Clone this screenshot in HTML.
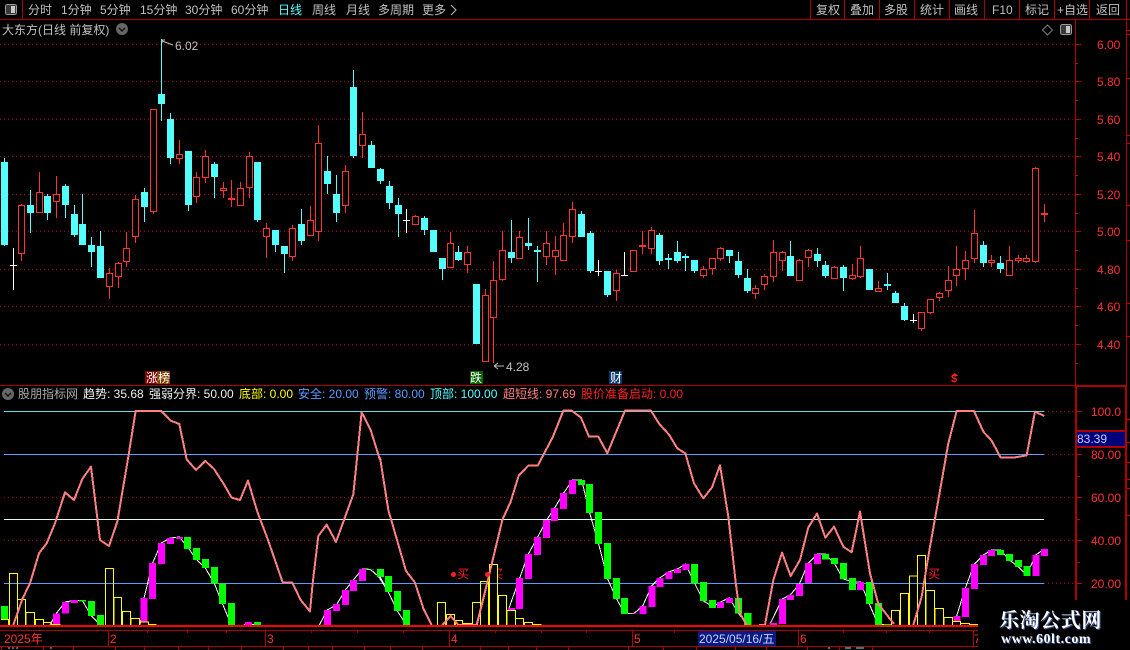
<!DOCTYPE html>
<html lang="zh"><head><meta charset="utf-8"><title>大东方</title>
<style>
html,body{margin:0;padding:0;background:#000;width:1130px;height:650px;overflow:hidden}
#r{position:relative;width:1130px;height:650px;background:#000;overflow:hidden;font:12px/16px "Liberation Sans","WenQuanYi Zen Hei","Noto Sans CJK SC",sans-serif;color:#c0c0c0}
#r span{position:absolute;white-space:nowrap}
svg{position:absolute;left:0;top:0}
.a{color:#ff3232;font-size:12px;left:1097px}
.l{color:#ff3232;left:1091px}
.d{color:#ff3232;top:631px}
</style></head><body><div id="r">
<svg width="1130" height="650" viewBox="0 0 1130 650" shape-rendering="crispEdges" fill="none">
<!-- grid -->
<path d="M0 44.5H1075M0 81.5H1075M0 119.5H1075M0 156.5H1075M0 194.5H1075M0 231.5H1075M0 269.5H1075M0 306.5H1075M0 344.5H1075M4 497.5H1075M4 540.5H1075" stroke="#a00000" stroke-dasharray="1 3"/>
<path d="M1044 411.5H1075M1044 454.5H1075M1044 583.5H1075" stroke="#a00000" stroke-dasharray="1 3"/>
<!-- frame -->
<path d="M0 19.5H1130M22.5 0V19M810.5 0V19M844.5 0V19M879.5 0V19M914.5 0V19M949.5 0V19M984.5 0V19M1019.5 0V19M1054.5 0V19M1089.5 0V19M1126.5 0V19M0 385.5H1075M1075.5 19V385" stroke="#b00000"/>
<path d="M1076 386V626M1075 386H1127M1126 386V600M1076 431H1126M1076 447H1126" stroke="#b00000" stroke-width="2"/>
<path d="M1126.5 19V386" stroke="#b00000"/>
<path d="M1075 44.5h6M1075 81.5h6M1075 119.5h6M1075 156.5h6M1075 194.5h6M1075 231.5h6M1075 269.5h6M1075 306.5h6M1075 344.5h6M1075 63.5h3M1075 100.5h3M1075 138.5h3M1075 175.5h3M1075 213.5h3M1075 250.5h3M1075 288.5h3M1075 325.5h3M1075 363.5h3M1077 411.5h5M1077 454.5h5M1077 497.5h5M1077 540.5h5M1077 583.5h5M1077 476.5h3M1077 519.5h3M1077 562.5h3" stroke="#c00000"/>
<path d="M1127 30.5h3M1127 34.5h3M1127 78.5h3M1127 135.5h3M1127 143.5h3M1127 205.5h3M1127 240.5h3M1127 303.5h3M1127 336.5h3M1127 419.5h3M1127 442.5h3M1127 462.5h3M1127 479.5h3M1127 488.5h3M1127 515.5h3" stroke="#c00000"/>
<!-- icons -->
<rect x="5.5" y="4.5" width="11" height="10" rx="2" fill="#3a3a3a" stroke="#9a9a9a"/><rect x="11" y="6" width="4" height="7" fill="#c8c8c8"/>
<path d="M451 5l5 5-5 5" stroke="#c0c0c0" shape-rendering="auto"/>
<circle cx="122" cy="29" r="6" fill="#666" shape-rendering="auto"/><path d="M119 28l3 3 3-3" stroke="#111" stroke-width="1.4" shape-rendering="auto"/>
<circle cx="8" cy="394" r="6" fill="#666" shape-rendering="auto"/><path d="M5 393l3 3 3-3" stroke="#111" stroke-width="1.4" shape-rendering="auto"/>
<path d="M1047.5 25l5 5-5 5-5-5z" stroke="#808080" shape-rendering="auto"/>
<rect x="1060.5" y="24.5" width="11" height="10" rx="2" fill="#3a3a3a" stroke="#9a9a9a"/><rect x="1066" y="26" width="4" height="7" fill="#c8c8c8"/>
<!-- lower horizontal lines -->
<path d="M4 411.5H1044" stroke="#55e0e8"/>
<path d="M4 454.5H1044M4 583.5H1044" stroke="#5c9cff"/>
<path d="M4 519.5H1044" stroke="#d8f8f8"/>
<!-- cyan candle wicks -->
<path stroke="#54ffff" d="M4.5 158V246M30.5 190V233M47.5 194V220M65.5 184V218M74.5 205V237M82.5 194V245M91.5 237V267M100.5 231V278M144.5 188V222M161.5 39V121M170.5 113V164M188.5 151V211M214.5 162V198M257.5 162V222M275.5 230V252M284.5 246V273M301.5 209V245M327.5 156V194M336.5 175V222M353.5 70V158M371.5 141V168M380.5 168V184M389.5 181V209M398.5 198V237M424.5 216V235M442.5 258V280M458.5 246V261M511.5 220V263M528.5 218V250M537.5 246V282M581.5 211V237M590.5 231V273M607.5 271V297M659.5 233V265M668.5 254V269M677.5 241V263M685.5 254V271M694.5 260V273M729.5 250V263M738.5 252V278M747.5 269V293M790.5 241V276M817.5 248V267M825.5 261V278M843.5 265V291M887.5 273V290M895.5 291V303M904.5 303V321M983.5 241V267M1000.5 256V273"/>
<!-- cyan bodies -->
<path fill="#54ffff" d="M1 162h7V245h-7zM27 205h7V213h-7zM44 196h7V213h-7zM62 186h7V205h-7zM71 214h7V235h-7zM79 224h7V245h-7zM88 245h7V252h-7zM97 246h7V278h-7zM141 192h7V207h-7zM158 94h7V104h-7zM167 119h7V158h-7zM185 151h7V205h-7zM211 164h7V177h-7zM254 162h7V220h-7zM272 230h7V245h-7zM281 246h7V254h-7zM298 224h7V241h-7zM324 171h7V184h-7zM333 194h7V213h-7zM350 87h7V156h-7zM368 145h7V168h-7zM377 169h7V181h-7zM386 186h7V203h-7zM395 205h7V214h-7zM421 218h7V230h-7zM430 230h7V252h-7zM439 258h7V269h-7zM455 252h7V260h-7zM473 284h7V344h-7zM508 252h7V258h-7zM525 243h7V246h-7zM534 250h7V252h-7zM578 214h7V237h-7zM587 233h7V271h-7zM604 271h7V295h-7zM656 235h7V261h-7zM665 258h7V260h-7zM674 252h7V261h-7zM682 256h7V258h-7zM691 260h7V271h-7zM726 250h7V256h-7zM735 261h7V275h-7zM744 278h7V291h-7zM787 256h7V276h-7zM814 254h7V261h-7zM822 265h7V276h-7zM840 267h7V278h-7zM866 269h7V290h-7zM884 284h7V286h-7zM892 293h7V303h-7zM901 306h7V320h-7zM980 245h7V263h-7zM997 263h7V269h-7z"/>
<!-- white dojis -->
<path stroke="#fff" d="M13.5 248V290M10 265.5h7M406.5 209V233M403 220.5h7M598.5 260V276M595 271.5h7M624.5 252V276M621 275.5h7M913.5 314V323M910 320.5h7"/>
<!-- red wicks -->
<path stroke="#ff3232" d="M21.5 204V261M39.5 172V213M56.5 176V218M109.5 268V299M118.5 262V288M126.5 232V267M135.5 195V243M153.5 109V214M179.5 140V164M196.5 172V203M205.5 150V183M223.5 182V198M231.5 180V207M240.5 182V206M249.5 152V198M266.5 223V258M292.5 225V261M310.5 206V236M318.5 125V241M345.5 165V213M362.5 112V158M415.5 215V225M450.5 232V268M467.5 246V273M485.5 289V362M493.5 261V363M502.5 231V281M519.5 231V259M546.5 231V265M555.5 236V275M563.5 223V261M572.5 202V243M616.5 270V301M642.5 231V254M651.5 227V254M703.5 266V278M712.5 258V275M720.5 247V261M755.5 285V299M764.5 274V290M773.5 240V282M782.5 251V271M799.5 259V281M808.5 249V267M834.5 266V279M852.5 264V280M860.5 246V278M878.5 281V292M921.5 312V331M930.5 299V314M939.5 292V301M948.5 266V297M956.5 246V286M965.5 251V280M974.5 210V263M991.5 255V267M1009.5 246V276M1018.5 255V263M1026.5 255V263M1035.5 167V263M1044.5 204V222"/>
<!-- red hollow bodies -->
<path stroke="#ff3232" fill="#000" d="M18.5 205.5h6V253.5h-6zM36.5 192.5h6V212.5h-6zM53.5 194.5h6V201.5h-6zM106.5 273.5h6V286.5h-6zM115.5 263.5h6V276.5h-6zM123.5 248.5h6V261.5h-6zM132.5 199.5h6V236.5h-6zM150.5 109.5h6V211.5h-6zM176.5 154.5h6V158.5h-6zM193.5 177.5h6V196.5h-6zM202.5 156.5h6V177.5h-6zM220.5 188.5h6V190.5h-6zM237.5 188.5h6V205.5h-6zM246.5 156.5h6V187.5h-6zM263.5 228.5h6V236.5h-6zM289.5 228.5h6V256.5h-6zM307.5 220.5h6V235.5h-6zM315.5 143.5h6V231.5h-6zM342.5 171.5h6V205.5h-6zM359.5 134.5h6V145.5h-6zM412.5 216.5h6V224.5h-6zM447.5 243.5h6V267.5h-6zM464.5 252.5h6V264.5h-6zM482.5 295.5h6V361.5h-6zM490.5 280.5h6V317.5h-6zM499.5 250.5h6V279.5h-6zM516.5 237.5h6V258.5h-6zM543.5 243.5h6V256.5h-6zM552.5 250.5h6V256.5h-6zM560.5 235.5h6V260.5h-6zM569.5 209.5h6V236.5h-6zM613.5 273.5h6V290.5h-6zM630.5 250.5h6V271.5h-6zM648.5 230.5h6V248.5h-6zM700.5 269.5h6V275.5h-6zM709.5 258.5h6V268.5h-6zM717.5 248.5h6V258.5h-6zM752.5 288.5h6V293.5h-6zM761.5 276.5h6V284.5h-6zM770.5 252.5h6V276.5h-6zM779.5 252.5h6V260.5h-6zM796.5 260.5h6V280.5h-6zM805.5 250.5h6V257.5h-6zM831.5 267.5h6V278.5h-6zM849.5 275.5h6V278.5h-6zM857.5 258.5h6V276.5h-6zM875.5 288.5h6V291.5h-6zM918.5 312.5h6V328.5h-6zM927.5 299.5h6V312.5h-6zM936.5 293.5h6V297.5h-6zM945.5 280.5h6V290.5h-6zM953.5 269.5h6V275.5h-6zM962.5 260.5h6V268.5h-6zM971.5 233.5h6V258.5h-6zM988.5 260.5h6V262.5h-6zM1006.5 260.5h6V275.5h-6zM1015.5 258.5h6V260.5h-6zM1023.5 258.5h6V261.5h-6zM1032.5 168.5h6V261.5h-6z"/>
<path fill="#ff3232" d="M228 198h7v2h-7zM639 245h7v2h-7zM1041 213h7v2h-7z"/>
<!-- extreme marks -->
<path stroke="#c0c0c0" d="M162 40h3M162 40v3M162 41l11 4" shape-rendering="auto"/>
<path stroke="#c0c0c0" d="M494 366h10M494 366l4-3M494 366l4 3" shape-rendering="auto"/>
<!-- tags -->
<rect x="145" y="371" width="12" height="13" fill="#800000"/><rect x="157" y="371" width="13" height="13" fill="#804000"/>
<rect x="470" y="371" width="13" height="13" fill="#006400"/><rect x="609" y="371" width="13" height="13" fill="#0a3a6e"/>
<path d="M954.5 373l-3 3h7z" fill="#ff2020"/>
<!-- lower panel bars: zoom group 1 -->
<g transform="translate(0,400) scale(.33333)">
<polyline stroke="#fff" stroke-width="3" points="150,675 169,640 196,606 223,601 247,601 274,648 301,675"/>
<polyline stroke="#fff" stroke-width="3" points="420,675 432,594 458,489 484,429 511,414 538,411 562,440 589,478 616,504 643,550 667,610 694,675"/>
<polyline stroke="#fff" stroke-width="3" points="730,675 745,672 772,675"/>
<polyline stroke="#fff" stroke-width="3" points="958,675 982,630 1009,615 1036,570 1060,540 1087,507 1111,508 1136,530 1165,576 1192,633 1219,675"/>
<path fill="#ff00ff" d="M159 640h21V672h-21zM186 606h21V641h-21zM213 600h21V609h-21zM422 594h21V666h-21zM447 489h21V597h-21zM474 429h21V492h-21zM501 414h21V432h-21zM528 411h21V417h-21zM735 666h21V675h-21zM972 630h21V675h-21zM999 612h21V633h-21zM1026 570h21V615h-21zM1050 540h21V573h-21zM1077 507h21V543h-21z"/>
<path fill="#00ff00" d="M3 618h21V658h-21zM237 600h21V605h-21zM264 603h21V648h-21zM291 645h21V675h-21zM552 411h21V447h-21zM579 444h21V480h-21zM606 477h21V504h-21zM633 501h21V550h-21zM657 551h21V612h-21zM684 609h21V675h-21zM762 666h21V675h-21zM1101 508h21V510h-21zM1131 507h9V531h-9z"/>
<path stroke="#ffff00" stroke-width="3" d="M3 658H25V675M28 675V520H52V675M52 598H76V675M78 675V637H103V675M106 675V658H130V675M131 675V667H154V675M154 673H182M316 675V505H340V675M342 675V592H365V675M367 675V634H391V675M393 675V655H418V675M420 675V666H445V675M445 673H470"/>
<path stroke="#ff8080" stroke-width="6" stroke-linejoin="round" fill="none" d="M40 675L67 597L90 550L117 460L140 430L165 370L195 277L222 300L247 237L273 200L300 420L327 438L352 365L385 170L407 33L484 33L512 62L538 72L560 178L588 210L616 183L642 207L670 250L695 293L720 300L744 242L772 335L804 420L848 547L877 548L902 600L930 634L938 550L955 408L980 374L1008 426L1060 283L1085 37L1112 90L1140 180"/>
</g>
<!-- group 2 -->
<g transform="translate(380,400) scale(.33333)">
<polyline stroke="#fff" stroke-width="3" points="385,630 419,534 445,462 473,411 500,360 524,324 551,279 578,240 605,240 629,339 656,432 683,537 710,597 734,641 761,641 788,618 815,558 839,534 866,516 892,507 917,492 944,550 971,603 998,620 1021,606 1048,594 1076,641 1103,675"/>
<polyline stroke="#fff" stroke-width="3" points="0,530 25,576 52,633 79,675"/>
<path fill="#ff00ff" d="M384 624h21V631h-21zM408 534h21V627h-21zM435 462h21V537h-21zM462 411h21V465h-21zM489 360h21V414h-21zM513 324h21V363h-21zM540 279h21V327h-21zM567 240h21V282h-21zM751 639h21V641h-21zM778 618h21V642h-21zM805 558h21V621h-21zM829 534h21V561h-21zM856 516h21V537h-21zM882 507h21V519h-21zM907 492h21V510h-21zM1011 606h21V624h-21zM1038 594h21V609h-21z"/>
<path fill="#00ff00" d="M0 507h12V531h-12zM15 528h21V576h-21zM42 573h21V633h-21zM69 630h21V675h-21zM594 240h21V255h-21zM618 252h21V339h-21zM645 336h21V432h-21zM672 429h21V537h-21zM699 534h21V597h-21zM723 594h21V642h-21zM933 492h21V550h-21zM960 546h21V603h-21zM987 600h21V624h-21zM1065 594h21V641h-21zM1092 639h21V675h-21z"/>
<path stroke="#ffff00" stroke-width="3" d="M173 675V607H197V675M199 675V643H224V675M226 675V661H248V675M248 670H275V675M277 675V607H301V675M302 675V544H326V675M328 675V493H353V675M355 675V586H380V675M381 675V631H407V675M407 655H431V675M433 675V667H458V675M458 673H485"/>
<path stroke="#ff8080" stroke-width="6" stroke-linejoin="round" fill="none" d="M0 172L25 330L78 513L105 548L130 625L155 675M187 675L212 648L235 675L290 675L320 555L367 360L392 305L416 227L445 197L473 197L518 112L550 32L575 32L603 53L627 110L655 110L682 160L735 32L813 32L838 72L868 105L892 145L916 160L942 250L970 295L996 262L1020 196L1045 350L1068 555L1080 640L1100 675"/>
</g>
<!-- group 3 -->
<g transform="translate(750,400) scale(.33333)">
<polyline stroke="#fff" stroke-width="3" points="60,672 97,597 121,585 148,552 175,489 202,462 226,462 253,490 280,537 307,545 331,546 358,612 385,675 412,673"/>
<polyline stroke="#fff" stroke-width="3" points="620,648 646,564 673,492 700,465 724,450 751,450 778,480 805,500 830,525 857,465 883,447"/>
<path fill="#ff00ff" d="M60 669h21V675h-21zM87 597h21V672h-21zM111 585h21V600h-21zM138 552h21V588h-21zM165 489h21V549h-21zM192 462h21V492h-21zM321 546h21V570h-21zM610 648h21V664h-21zM636 564h21V651h-21zM663 492h21V567h-21zM690 465h21V495h-21zM714 450h21V468h-21zM847 465h21V528h-21zM873 447h21V468h-21z"/>
<path fill="#00ff00" d="M0 639h4V675h-4zM216 462h21V478h-21zM243 474h21V492h-21zM270 489h21V537h-21zM297 534h21V570h-21zM348 546h21V612h-21zM375 609h21V675h-21zM402 672h21V675h-21zM741 450h21V465h-21zM768 462h21V483h-21zM795 480h21V501h-21zM820 498h21V528h-21z"/>
<path stroke="#ffff00" stroke-width="3" d="M425 675V631H449V675M451 675V580H476V675M478 675V528H502V675M502 675V466H527V675M528 675V571H554V675M555 675V625H581V675M582 675V652H608V675M608 664H632V675M632 670H658V675M658 673H684"/>
<path stroke="#ff8080" stroke-width="6" stroke-linejoin="round" fill="none" d="M27 675L45 675L70 540L96 458L122 528L150 480L175 382L201 341L226 413L252 380L280 440L305 457L330 335L360 520L385 612L432 672M490 675L515 590L540 440L565 300L595 130L620 33L672 33L700 95L725 122L752 173L790 173L830 166L855 35L883 48"/>
</g>
<!-- buy dots -->
<circle cx="453.5" cy="574.5" r="2.5" fill="#ff2020" shape-rendering="auto"/>
<circle cx="487.5" cy="574.5" r="2.5" fill="#ff2020" shape-rendering="auto"/>
<!-- bottom axis -->
<path d="M0 626H978" stroke="#ff0000" stroke-width="2"/>
<path d="M0 630.5H978M0 646.5H978M108.5 630V646M265.5 630V646M449.5 630V646M632.5 630V646M798.5 630V646M973.5 630V646M147.5 631v2M187.5 631v2M226.5 631v2M311.5 631v2M357.5 631v2M403.5 631v2M495.5 631v2M541.5 631v2M586.5 631v2M674.5 631v2M843.5 631v2M886.5 631v2M929.5 631v2M1.5 647v3M43.5 647v3M73.5 647v3M115.5 647v3M144.5 647v3M178.5 647v3M208.5 647v3M241.5 647v3M283.5 647v3M308.5 647v3M332.5 647v3M364.5 647v3M390.5 647v3M422.5 647v3M480.5 647v3M508.5 647v3M536.5 647v3M568.5 647v3M628.5 647v3M663.5 647v3M696.5 647v3M735.5 647v3M766.5 647v3M807.5 647v3M839.5 647v3M872.5 647v3" stroke="#b00000"/>
<rect x="698" y="631" width="78" height="15" fill="#0a1a80"/>
<path d="M8 648h2M12 648h2M16 648h2M50 648h2" stroke="#c0c0c0"/>
<path d="M828 648h2M845 648h6M856 648h8" stroke="#54ffff"/>
<!-- value box -->
<rect x="1077" y="432" width="48" height="14" fill="#00007c"/>
<!-- watermark backdrop -->
<rect x="978" y="600" width="152" height="50" fill="#000"/>
</svg>

<span style="left:28px;top:2px">分时</span>
<span style="left:61px;top:2px">1分钟</span>
<span style="left:100px;top:2px">5分钟</span>
<span style="left:140px;top:2px">15分钟</span>
<span style="left:185px;top:2px">30分钟</span>
<span style="left:231px;top:2px">60分钟</span>
<span style="left:278px;top:2px;color:#54ffff">日线</span>
<span style="left:312px;top:2px">周线</span>
<span style="left:346px;top:2px">月线</span>
<span style="left:378px;top:2px">多周期</span>
<span style="left:422px;top:2px">更多</span>
<span style="left:816px;top:2px">复权</span>
<span style="left:850px;top:2px">叠加</span>
<span style="left:884px;top:2px">多股</span>
<span style="left:920px;top:2px">统计</span>
<span style="left:954px;top:2px">画线</span>
<span style="left:992px;top:2px">F10</span>
<span style="left:1025px;top:2px">标记</span>
<span style="left:1057px;top:2px">+自选</span>
<span style="left:1096px;top:2px">返回</span>
<span style="left:2px;top:22px">大东方(日线 前复权)</span>
<span style="left:175px;top:38px">6.02</span>
<span style="left:506px;top:359px">4.28</span>

<span class="a" style="top:37px">6.00</span>
<span class="a" style="top:74px">5.80</span>
<span class="a" style="top:112px">5.60</span>
<span class="a" style="top:149px">5.40</span>
<span class="a" style="top:187px">5.20</span>
<span class="a" style="top:224px">5.00</span>
<span class="a" style="top:262px">4.80</span>
<span class="a" style="top:299px">4.60</span>
<span class="a" style="top:337px">4.40</span>
<span class="l" style="top:404px">100.0</span>
<span style="left:1077px;top:431px;color:#c8c8ff">83.39</span>
<span class="l" style="top:447px">80.00</span>
<span class="l" style="top:490px">60.00</span>
<span class="l" style="top:533px">40.00</span>
<span class="l" style="top:576px">20.00</span>

<span style="left:146px;top:370px;color:#fff">涨榜</span>
<span style="left:470px;top:370px;color:#fff">跌</span>
<span style="left:610px;top:370px;color:#fff">财</span>
<span style="left:951px;top:373px;font:bold 11px/12px 'Liberation Sans',sans-serif;color:#ff2020">$</span>

<span style="left:18px;top:386px;color:#a8a8a8">股朋指标网</span>
<span style="left:83px;top:386px;color:#f0f0f0">趋势: 35.68</span>
<span style="left:149px;top:386px;color:#f0f0f0">强弱分界: 50.00</span>
<span style="left:239px;top:386px;color:#ffff00">底部: 0.00</span>
<span style="left:298px;top:386px;color:#5c9cff">安全: 20.00</span>
<span style="left:364px;top:386px;color:#5c9cff">预警: 80.00</span>
<span style="left:430px;top:386px;color:#54ffff">顶部: 100.00</span>
<span style="left:503px;top:386px;color:#ff8080">超短线: 97.69</span>
<span style="left:581px;top:386px;color:#ff2020">股价准备启动: 0.00</span>

<span style="left:457px;top:566px;color:#ff2020">买</span>
<span style="left:498px;top:566px;width:6px;overflow:hidden;text-indent:-7px;color:#ff2020">买</span>
<span style="left:928px;top:566px;color:#ff2020">买</span>

<span class="d" style="left:4px">2025年</span>
<span class="d" style="left:110px">2</span>
<span class="d" style="left:267px">3</span>
<span class="d" style="left:451px">4</span>
<span class="d" style="left:634px">5</span>
<span style="left:699px;top:631px;color:#c8d0ff">2025/05/16/五</span>
<span class="d" style="left:800px">6</span>
<span class="d" style="left:974px;width:4px;overflow:hidden">7</span>

<span style="left:999px;top:606px;font:bold 20px/26px 'Noto Serif CJK SC','Noto Sans CJK SC',serif;letter-spacing:.6px;color:#fff;text-shadow:1px 1px 0 #3a5a9a">乐淘公式网</span>
<span style="left:1001px;top:632px;font:bold 14px/16px 'Liberation Serif',serif;letter-spacing:.5px;color:#fff;text-shadow:1px 1px 0 #3a5a9a">www.60lt.com</span>
</div></body></html>
